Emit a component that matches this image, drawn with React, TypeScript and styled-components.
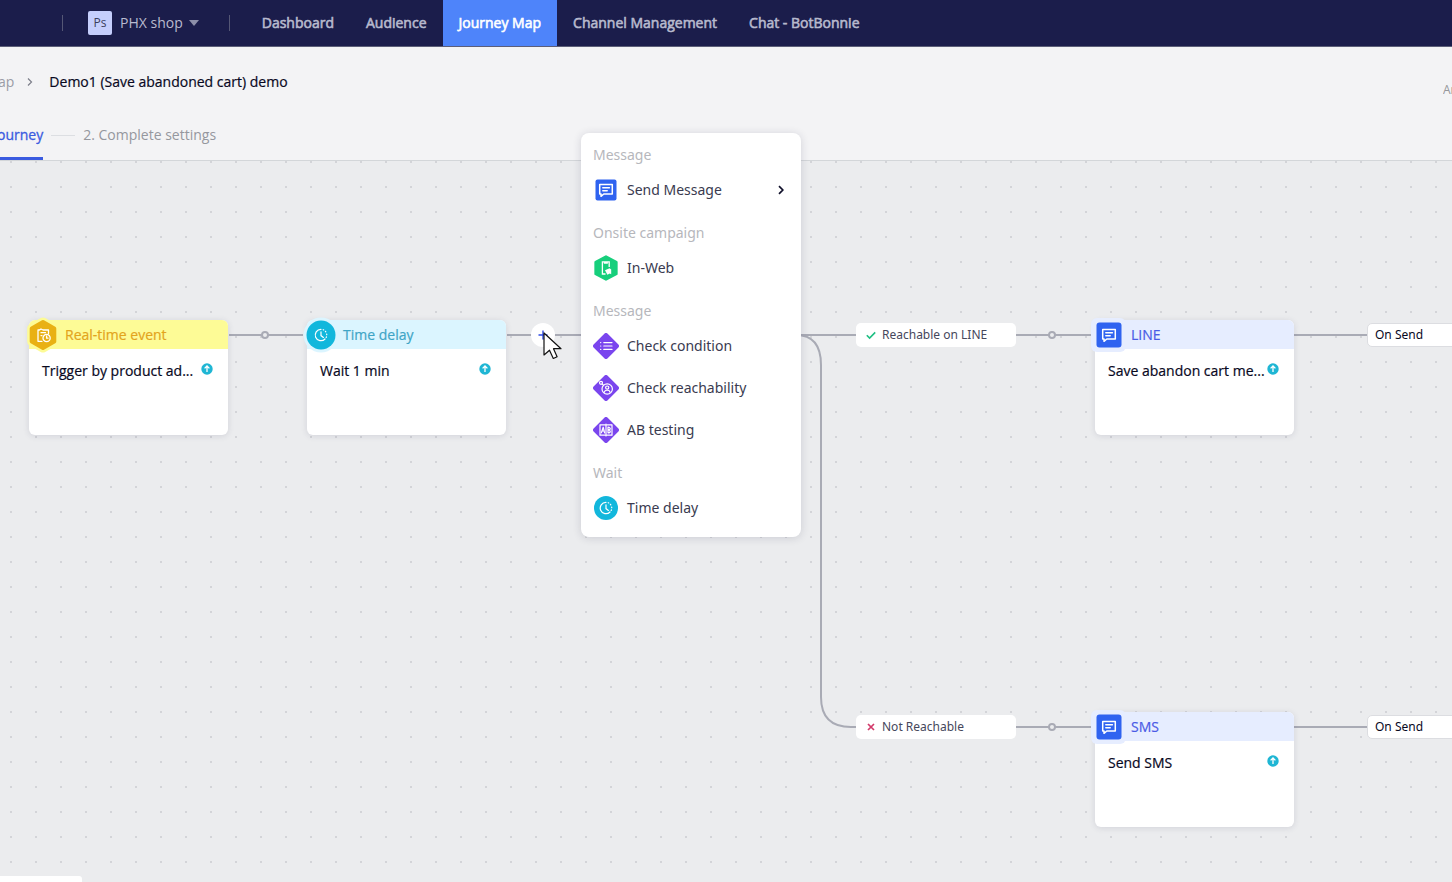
import React from 'react';
import styled, { createGlobalStyle, css } from 'styled-components';

const GlobalStyle = createGlobalStyle`
  *, *::before, *::after { box-sizing: border-box; }
  body {
    margin: 0;
    background: #ebecee;
    color: #08081e;
    font-family: 'Open Sans', 'Noto Sans', sans-serif;
    font-size: 14px;
    line-height: 20px;
  }
  button { font: inherit; color: inherit; border: 0; padding: 0; background: none; cursor: pointer; }
  a { color: inherit; text-decoration: none; }
  svg { display: block; flex: none; }
`;

const Page = styled.div`
  min-height: 100vh;
  display: flex;
  flex-direction: column;
  overflow: hidden;
`;

/* ---------- top bar ---------- */

const TopBar = styled.header`
  display: flex;
  align-items: center;
  height: 47px;
  padding-left: 62px;
  background: #1b1d4b;
  border-bottom: 1px solid #5c5e78;
`;

const Divider = styled.span`
  width: 1px;
  height: 16px;
  background: #555775;
`;

const ShopButton = styled.button`
  display: flex;
  align-items: center;
  gap: 8px;
  margin: 0 30px 0 25px;
  color: #b9bbd0;
`;

const ShopBadge = styled.span`
  width: 24px;
  height: 24px;
  border-radius: 2px;
  background: #c5cefc;
  color: #3a3d5c;
  font-size: 12px;
  line-height: 24px;
  text-align: center;
`;

const ShopName = styled.span`
  display: flex;
  align-items: center;
  gap: 6px;
`;

const Nav = styled.nav`
  display: flex;
  align-self: stretch;
  margin-left: 16px;
`;

const NavLink = styled.a<{ $active?: boolean }>`
  display: flex;
  align-items: center;
  padding: 0 16px;
  white-space: nowrap;
  color: ${p => (p.$active ? '#ffffff' : '#b7b9cd')};
  background: ${p => (p.$active ? '#4e84fa' : 'transparent')};
  -webkit-text-stroke: 0.6px currentColor;
`;

/* ---------- sub header ---------- */

const SubHeader = styled.div`
  padding-top: 23px;
  background: #f3f3f5;
  border-bottom: 1px solid #d3d6d9;
`;

const TitleRow = styled.div`
  display: flex;
  justify-content: space-between;
  height: 40px;
`;

const Breadcrumb = styled.nav`
  display: flex;
  align-items: center;
  height: 24px;
  margin-left: -2px;
  white-space: nowrap;
`;

const Crumb = styled.a`
  margin-right: 13px;
  color: #9a9ca6;
`;

const PageTitle = styled.h1`
  margin: 0 0 0 16px;
  font-size: 14px;
  font-weight: 400;
  -webkit-text-stroke: 0.2px currentColor;
`;

const AutoSave = styled.span`
  width: 9px;
  overflow: hidden;
  color: #95969b;
  font-size: 12px;
  line-height: 40px;
`;

const Steps = styled.div`
  display: flex;
  align-items: center;
  height: 50px;
  margin-left: -3px;
`;

const Step = styled.button<{ $active?: boolean }>`
  height: 50px;
  color: ${p => (p.$active ? '#3a5be0' : '#95979e')};
  border-bottom: 3px solid ${p => (p.$active ? '#3a5be0' : 'transparent')};
  border-top: 3px solid transparent;
  ${p => p.$active && css`-webkit-text-stroke: 0.3px currentColor;`}
`;

const StepLine = styled.span`
  width: 24px;
  height: 1px;
  margin: 0 8px;
  background: #dcdee2;
`;

/* ---------- canvas ---------- */

const Workspace = styled.main`
  position: relative;
  flex: 1;
  display: flex;
`;

const Canvas = styled.div`
  position: relative;
  flex: 1;
  min-height: 720px;
  overflow: hidden;
  background-color: #ebecee;
  background-image: radial-gradient(circle at 11px 1px, #d3d4d8 0, #d3d4d8 1px, transparent 1px);
  background-size: 25px 25px;
`;

const Edges = styled.svg`
  position: absolute;
  inset: 0;
  width: 100%;
  height: 100%;
  fill: none;
  stroke: #a9abb5;
  stroke-width: 2;
`;

const Placed = styled.div<{ $x: number; $y: number }>`
  position: absolute;
  left: ${p => p.$x}px;
  top: ${p => p.$y}px;
`;

type Tone = 'event' | 'wait' | 'message';

const tones: Record<Tone, { bg: string; text: string }> = {
  event: { bg: '#fdfb96', text: '#e3a41c' },
  wait: { bg: '#dbf5ff', text: '#3fa5c6' },
  message: { bg: '#e6edff', text: '#4a5be6' },
};

const Card = styled(Placed)`
  width: 199px;
  height: 115px;
  border-radius: 6px;
  background: #ffffff;
  box-shadow: 0 1px 6px rgba(60, 60, 90, 0.14);
`;

const CardHead = styled.div<{ $tone: Tone }>`
  display: flex;
  align-items: center;
  gap: 4px;
  height: 29px;
  border-radius: 6px 6px 0 0;
  background: ${p => tones[p.$tone].bg};
  color: ${p => tones[p.$tone].text};
  svg { margin-left: -4px; }
`;

const CardTitle = styled.span`
  -webkit-text-stroke: 0.2px currentColor;
`;

const CardBody = styled.div`
  display: flex;
  justify-content: space-between;
  padding: 12px 15px 0 13px;
  white-space: nowrap;
  -webkit-text-stroke: 0.2px currentColor;
  svg { margin-top: 2px; }
`;

const Chip = styled(Placed)`
  display: flex;
  align-items: center;
  gap: 6px;
  width: 160px;
  height: 24px;
  padding-left: 10px;
  border-radius: 5px;
  background: #ffffff;
  color: #46475c;
  font-family: 'Noto Sans', sans-serif;
  font-size: 12px;
`;

const OutChip = styled(Chip)`
  padding-left: 7px;
  border: 1px solid #dcdde1;
  color: #08081e;
`;

const AddButton = styled.button<{ $x: number; $y: number }>`
  position: absolute;
  left: ${p => p.$x}px;
  top: ${p => p.$y}px;
  width: 24px;
  height: 24px;
  display: grid;
  place-items: center;
  border-radius: 50%;
  background: #ffffff;
`;

const CornerPanel = styled.div`
  position: absolute;
  left: 0;
  bottom: 0;
  width: 82px;
  height: 6px;
  border-radius: 0 3px 0 0;
  background: #ffffff;
`;

/* ---------- step menu ---------- */

const Menu = styled.div`
  position: absolute;
  left: 581px;
  top: -28px;
  width: 220px;
  display: flex;
  flex-direction: column;
  gap: 8px;
  padding: 8px 0;
  border-radius: 8px;
  background: #ffffff;
  box-shadow: 0 1px 8px rgba(40, 40, 70, 0.16);
  font-family: 'Noto Sans', sans-serif;
`;

const MenuGroup = styled.section`
  display: flex;
  flex-direction: column;
`;

const MenuLabel = styled.h2`
  margin: 0;
  padding: 0 12px;
  font-size: 14px;
  font-weight: 400;
  line-height: 28px;
  color: #b6b7bc;
`;

const MenuItem = styled.button`
  display: flex;
  align-items: center;
  gap: 8px;
  height: 42px;
  padding: 0 15px 0 12px;
  color: #3a3b50;
`;

const Grow = styled.span`
  flex: 1;
  text-align: left;
`;

const Cursor = styled.svg`
  position: absolute;
  left: 542px;
  top: 170px;
  pointer-events: none;
`;

/* ---------- icons ---------- */

const ClockGlyph = () => (
  <g fill="none" stroke="#fff" strokeWidth="1.2" strokeLinecap="round">
    <path d="M0 -5.7A5.7 5.7 0 1 0 4 4" />
    <path d="M2.2 -5.3A5.7 5.7 0 0 1 5 2.8" strokeDasharray="0.6 2.2" />
    <path d="M0 -3.2V0.6L2.4 2.4" />
  </g>
);

const MessageGlyph = () => (
  <g fill="none" stroke="#fff" strokeWidth="1.5" strokeLinejoin="round" strokeLinecap="round">
    <path d="M-6.3 -5.5H6.3V4H-2.2L-5 6.3V4H-6.3Z" />
    <path d="M-3.2 -2.3H3.4M-3.2 0.8H1.2" />
  </g>
);

const HEX = 'M0 -13L11.3 -6.5V6.5L0 13L-11.3 6.5V-6.5Z';

const EventIcon = () => (
  <svg width="36" height="36" viewBox="-18 -18 36 36" aria-hidden="true">
    <path d={HEX} fill="#fdfb96" stroke="#fdfb96" strokeWidth="9" strokeLinejoin="round" />
    <path d={HEX} fill="#e9b114" stroke="#e9b114" strokeWidth="4" strokeLinejoin="round" />
    <g fill="none" stroke="#fff" strokeWidth="1.3" strokeLinejoin="round" strokeLinecap="round">
      <path d="M-1 6.3H-5V-5H-3.5L-2 -6L0 -5H5.5V-1.5" />
      <path d="M-2 -2.3H2.5M-2 0.6H-1" />
      <circle cx="3.6" cy="3" r="3.6" />
      <path d="M3.6 1V3.2H5" />
    </g>
  </svg>
);

const WaitIcon = () => (
  <svg width="36" height="36" viewBox="-18 -18 36 36" aria-hidden="true">
    <circle r="17.5" fill="#dbf5ff" />
    <circle r="14.5" fill="#12b7dc" />
    <ClockGlyph />
  </svg>
);

const MessageIcon = () => (
  <svg width="36" height="36" viewBox="-18 -18 36 36" aria-hidden="true">
    <rect x="-18" y="-17" width="35" height="34" rx="6" fill="#e6edff" />
    <rect x="-12.5" y="-12.5" width="25" height="25" rx="3" fill="#2f63f0" />
    <MessageGlyph />
  </svg>
);

const MenuMessageIcon = () => (
  <svg width="26" height="26" viewBox="-13 -13 26 26" aria-hidden="true">
    <rect x="-10.5" y="-10.5" width="21" height="21" rx="2" fill="#2f63f0" />
    <MessageGlyph />
  </svg>
);

const MenuWebIcon = () => (
  <svg width="26" height="26" viewBox="-13 -13 26 26" aria-hidden="true">
    <path d="M0 -11.5L10.4 -6V6L0 11.5L-10.4 6V-6Z" fill="#17cf7c" stroke="#17cf7c" strokeWidth="2.5" strokeLinejoin="round" />
    <path d="M3.2 -1V-6.2H-3.6V6H-0.5M-1.5 -6V-5H1.2V-6" fill="none" stroke="#fff" strokeWidth="1.3" />
    <path d="M-1 2.2L3.6 0.2L5.2 1.4V6.3L3.8 5.4L1.4 6.8Z" fill="#fff" />
  </svg>
);

const Diamond = ({ children }: { children: React.ReactNode }) => (
  <svg width="26" height="26" viewBox="-13 -13 26 26" aria-hidden="true">
    <path d="M0 -11L11 0L0 11L-11 0Z" fill="#7a45ee" stroke="#7a45ee" strokeWidth="4" strokeLinejoin="round" />
    <g fill="none" stroke="#fff" strokeWidth="1.2" strokeLinecap="round" strokeLinejoin="round">
      {children}
    </g>
  </svg>
);

const ConditionIcon = () => (
  <Diamond>
    <path d="M-2.2 -3.4H6M-2.2 0H6M-2.2 3.4H6M-5.4 -3.4H-5.2M-5.4 0H-5.2M-5.4 3.4H-5.2" />
  </Diamond>
);

const ReachIcon = () => (
  <Diamond>
    <circle cx="1.2" cy="1" r="5.2" />
    <circle cx="1.2" cy="-0.4" r="1.6" />
    <path d="M-1.6 4.2C-1.2 1.6 3.6 1.6 4 4.2" />
    <circle cx="-5" cy="-5.2" r="1.5" />
    <path d="M-3.8 -4L-2.6 -2.8" />
  </Diamond>
);

const AbIcon = () => (
  <Diamond>
    <path d="M-1 -5.2H-6V5.2H-1M1 -5.2H6V5.2H1M0 -6V6" />
    <path d="M-4.6 2.8L-2.8 -2.8L-1.4 2.8M-4 1H-2M2 -2.8V2.8M2 -2.8C5 -2.8 5 0 2 0C5 0 5 2.8 2 2.8" />
  </Diamond>
);

const MenuWaitIcon = () => (
  <svg width="26" height="26" viewBox="-13 -13 26 26" aria-hidden="true">
    <circle r="12" fill="#12b7dc" />
    <ClockGlyph />
  </svg>
);

const UpIcon = () => (
  <svg width="12" height="12" viewBox="-6 -6 12 12" aria-hidden="true">
    <circle r="5.7" fill="#1fb6d4" />
    <path d="M0 3V-2.8M-2.4 -0.6L0 -3L2.4 -0.6" fill="none" stroke="#fff" strokeWidth="1.3" />
  </svg>
);

const cardIcons: Record<Tone, () => React.ReactElement> = {
  event: EventIcon,
  wait: WaitIcon,
  message: MessageIcon,
};

/* ---------- data ---------- */

const tabs = ['Dashboard', 'Audience', 'Journey Map', 'Channel Management', 'Chat - BotBonnie'];

const cards: { x: number; y: number; tone: Tone; title: string; text: string }[] = [
  { x: 29, y: 159, tone: 'event', title: 'Real-time event', text: 'Trigger by product ad...' },
  { x: 307, y: 159, tone: 'wait', title: 'Time delay', text: 'Wait 1 min' },
  { x: 1095, y: 159, tone: 'message', title: 'LINE', text: 'Save abandon cart me...' },
  { x: 1095, y: 551, tone: 'message', title: 'SMS', text: 'Send SMS' },
];

const menu: {
  label: string;
  items: { name: string; Icon: () => React.ReactElement; more?: boolean }[];
}[] = [
  { label: 'Message', items: [{ name: 'Send Message', Icon: MenuMessageIcon, more: true }] },
  { label: 'Onsite campaign', items: [{ name: 'In-Web', Icon: MenuWebIcon }] },
  {
    label: 'Message',
    items: [
      { name: 'Check condition', Icon: ConditionIcon },
      { name: 'Check reachability', Icon: ReachIcon },
      { name: 'AB testing', Icon: AbIcon },
    ],
  },
  { label: 'Wait', items: [{ name: 'Time delay', Icon: MenuWaitIcon }] },
];

export default function App() {
  return (
    <Page>
      <GlobalStyle />
      <TopBar>
        <Divider />
        <ShopButton>
          <ShopBadge>Ps</ShopBadge>
          <ShopName>
            PHX shop
            <svg width="10" height="6" viewBox="0 0 10 6" aria-hidden="true">
              <path d="M0 0H10L5 6Z" fill="#8d8fa9" />
            </svg>
          </ShopName>
        </ShopButton>
        <Divider />
        <Nav>
          {tabs.map(t => (
            <NavLink key={t} href="#" $active={t === 'Journey Map'}>{t}</NavLink>
          ))}
        </Nav>
      </TopBar>

      <SubHeader>
        <TitleRow>
          <Breadcrumb>
            <Crumb href="#">ap</Crumb>
            <svg width="6" height="8" viewBox="0 0 6 8" aria-hidden="true">
              <path d="M1 0.5L4.5 4L1 7.5" fill="none" stroke="#7d7f8a" strokeWidth="1.2" />
            </svg>
            <PageTitle>Demo1 (Save abandoned cart) demo</PageTitle>
          </Breadcrumb>
          <AutoSave>Ar</AutoSave>
        </TitleRow>
        <Steps>
          <Step $active>ourney</Step>
          <StepLine />
          <Step>2. Complete settings</Step>
        </Steps>
      </SubHeader>

      <Workspace>
        <Canvas>
          <Edges aria-hidden="true">
            <path d="M229 174H303M507 174H1094M1294 174H1367" />
            <path d="M796 174Q821 174 821 204V536Q821 566 851 566H1094M1294 566H1367" />
            <g fill="#ebecee">
              <circle cx="265" cy="174" r="3" />
              <circle cx="1052" cy="174" r="3" />
              <circle cx="1052" cy="566" r="3" />
            </g>
          </Edges>

          {cards.map(c => {
            const Icon = cardIcons[c.tone];
            return (
              <Card key={c.title} $x={c.x} $y={c.y}>
                <CardHead $tone={c.tone}>
                  <Icon />
                  <CardTitle>{c.title}</CardTitle>
                </CardHead>
                <CardBody>
                  {c.text}
                  <UpIcon />
                </CardBody>
              </Card>
            );
          })}

          <Chip $x={856} $y={162}>
            <svg width="10" height="10" viewBox="0 0 10 10" aria-hidden="true">
              <path d="M0.8 5.2L3.6 8L9.2 2.4" fill="none" stroke="#1fbf83" strokeWidth="1.6" />
            </svg>
            Reachable on LINE
          </Chip>
          <Chip $x={856} $y={554}>
            <svg width="10" height="10" viewBox="0 0 10 10" aria-hidden="true">
              <path d="M2 2L8 8M8 2L2 8" fill="none" stroke="#d23a6a" strokeWidth="1.7" />
            </svg>
            Not Reachable
          </Chip>
          <OutChip $x={1367} $y={162}>On Send</OutChip>
          <OutChip $x={1367} $y={554}>On Send</OutChip>

          <AddButton $x={531} $y={162} aria-label="Add step">
            <svg width="10" height="10" viewBox="0 0 10 10" aria-hidden="true">
              <path d="M5 0.5V9.5M0.5 5H9.5" stroke="#2f4be6" strokeWidth="1.4" />
            </svg>
          </AddButton>
          <CornerPanel />
        </Canvas>

        <Menu>
          {menu.map((g, i) => (
            <MenuGroup key={i}>
              <MenuLabel>{g.label}</MenuLabel>
              {g.items.map(({ name, Icon, more }) => (
                <MenuItem key={name}>
                  <Icon />
                  <Grow>{name}</Grow>
                  {more && (
                    <svg width="10" height="10" viewBox="0 0 10 10" aria-hidden="true">
                      <path d="M3 1.2L6.8 5L3 8.8" fill="none" stroke="#11112b" strokeWidth="1.7" />
                    </svg>
                  )}
                </MenuItem>
              ))}
            </MenuGroup>
          ))}
        </Menu>

        <Cursor width="22" height="30" viewBox="0 0 22 30" aria-hidden="true">
          <path d="M2 2V24L7.5 19.2L11.3 27.5L15.1 25.7L11.5 17.7H19Z" fill="#fff" stroke="#111" strokeWidth="1.2" strokeLinejoin="round" />
        </Cursor>
      </Workspace>
    </Page>
  );
}
